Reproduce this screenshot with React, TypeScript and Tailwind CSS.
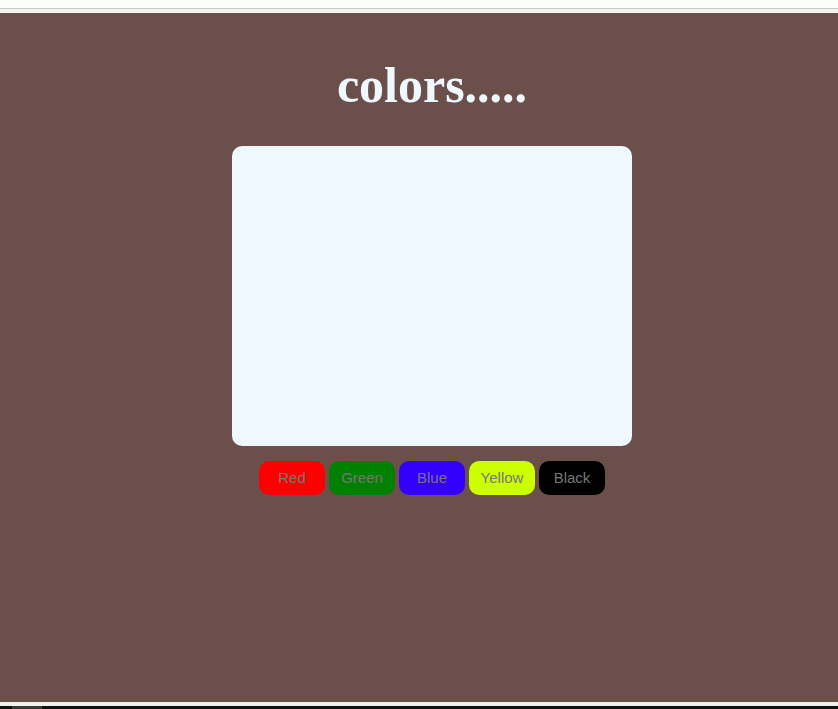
import React, { useState } from 'react';

const swatches = [
  { name: 'Red', bg: 'bg-[#ff0000]', hex: '#ff0000' },
  { name: 'Green', bg: 'bg-[#008000]', hex: '#008000' },
  { name: 'Blue', bg: 'bg-[#3300ff]', hex: '#3300ff' },
  { name: 'Yellow', bg: 'bg-[#ccff00]', hex: '#ccff00' },
  { name: 'Black', bg: 'bg-[#000000]', hex: '#000000' },
];

export default function App() {
  const [color, setColor] = useState('#f0f8ff');

  return (
    <div className="flex h-[709px] w-[838px] flex-col overflow-hidden bg-[#fcfdf8]">
      {/* browser chrome strip */}
      <div className="h-2 bg-[#fcfdf8]" />
      <div className="h-px bg-[#c9ccc5]" />
      <div className="h-1 bg-[#f3f4ef]" />

      <main className="flex h-[690px] flex-col items-center bg-[#6b4f4b] pl-[26px]">
        <h1
          className="mt-[44px] text-[50px] font-bold leading-[56px] text-[#f0f8ff]"
          style={{ fontFamily: '"Liberation Serif", "Times New Roman", serif' }}
        >
          colors.....
        </h1>

        <div className="mt-[33px] h-[300px] w-[400px] rounded-[10px]" style={{ backgroundColor: color }} />

        <div className="mt-[15px] flex gap-1">
          {swatches.map((s) => (
            <button
              key={s.name}
              onClick={() => setColor(s.hex)}
              className={`h-[34px] w-[66px] rounded-[10px] pt-px ${s.bg} text-[15px] text-[#777777]`}
              style={{ fontFamily: '"Liberation Sans", Arial, sans-serif' }}
            >
              {s.name}
            </button>
          ))}
        </div>
      </main>

      <div className="h-1 bg-[#f0f1ec]" />
      <div className="flex h-[3px] bg-[#111111]">
        <div className="ml-3 w-[30px] bg-[#3a3a36]" />
      </div>
    </div>
  );
}
